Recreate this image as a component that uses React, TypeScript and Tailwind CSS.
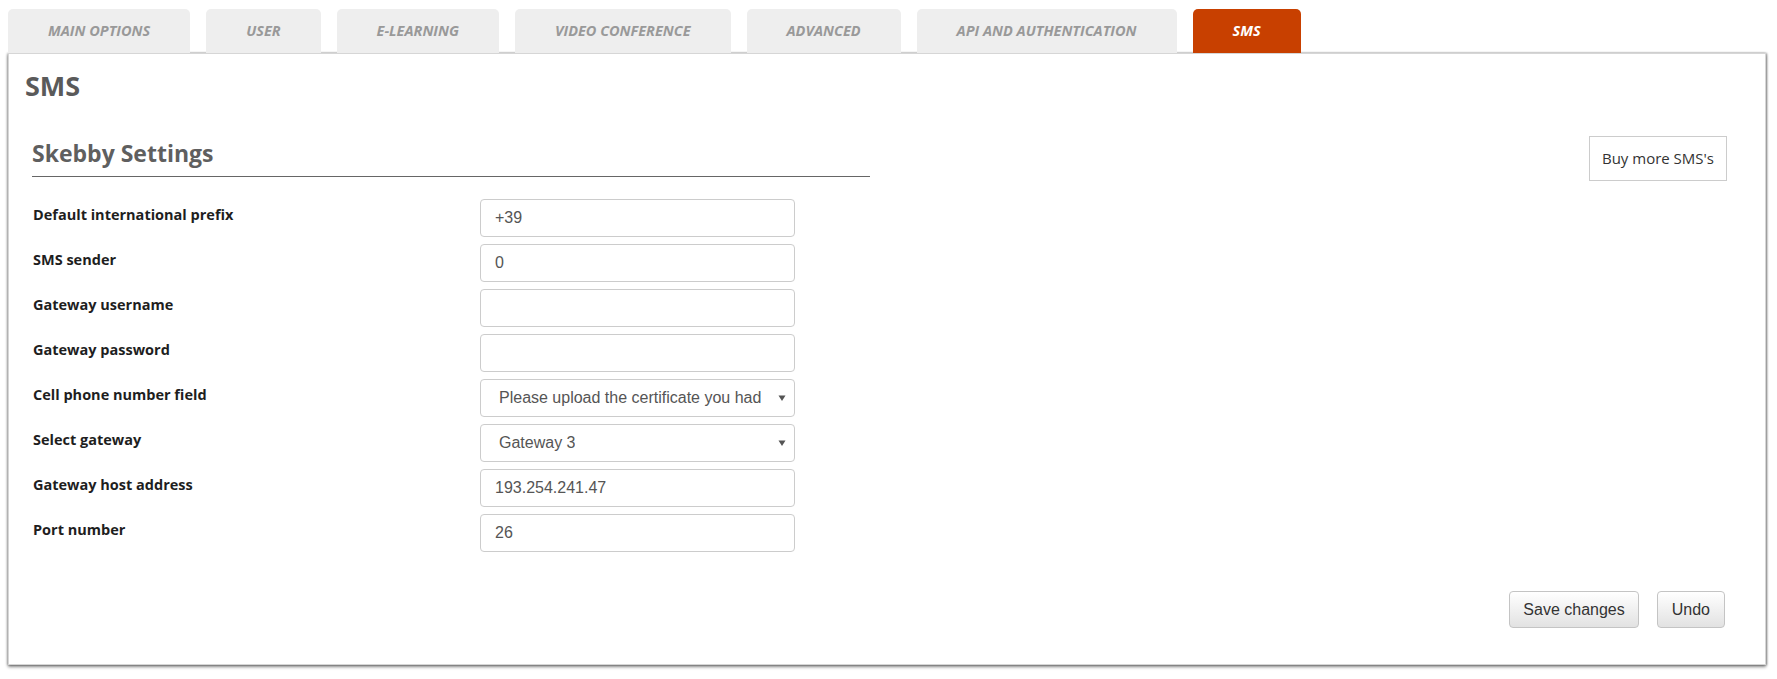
import React from "react";

const tabs = [
  "MAIN OPTIONS",
  "USER",
  "E-LEARNING",
  "VIDEO CONFERENCE",
  "ADVANCED",
  "API AND AUTHENTICATION",
  "SMS",
];

type Row = { label: string; value: string; kind: "input" | "select" };

const rows: Row[] = [
  { label: "Default international prefix", value: "+39", kind: "input" },
  { label: "SMS sender", value: "0", kind: "input" },
  { label: "Gateway username", value: "", kind: "input" },
  { label: "Gateway password", value: "", kind: "input" },
  { label: "Cell phone number field", value: "Please upload the certificate you had", kind: "select" },
  { label: "Select gateway", value: "Gateway 3", kind: "select" },
  { label: "Gateway host address", value: "193.254.241.47", kind: "input" },
  { label: "Port number", value: "26", kind: "input" },
];

function Arrow() {
  return (
    <svg width="8" height="8" viewBox="0 0 8 8" className="shrink-0">
      <path d="M0.5 1.5 L7.5 1.5 L4 7 Z" fill="#555" />
    </svg>
  );
}

export default function App() {
  return (
    <div className="w-[1777px] h-[679px] bg-white font-['Open_Sans',sans-serif] overflow-hidden">
      <div className="flex gap-[16px] pl-[8px] pt-[9px]">
        {tabs.map((t) => {
          const active = t === "SMS";
          return (
            <div
              key={t}
              className={
                active
                  ? "h-[44px] px-[40px] flex items-center rounded-t-[5px] bg-[#c84000] text-white text-[14.5px] font-bold italic"
                  : "h-[44px] px-[40px] flex items-center rounded-t-[5px] bg-[#eeeeee] text-[#999999] text-[14.5px] font-bold italic"
              }
            >
              {t}
            </div>
          );
        })}
      </div>
      <div className="ml-[8px] w-[1758px] h-[612px] border border-[#d6d6d6] shadow-[0_2px_3px_rgba(0,0,0,0.45),-1px_0_2px_rgba(0,0,0,0.2),1px_0_2px_rgba(0,0,0,0.35)] flex flex-col">
        <h1 className="mt-[18px] ml-[16px] text-[27px] leading-[27px] font-bold text-[#5a5a5a]">SMS</h1>
        <div className="flex justify-between items-start h-[41px] mt-[37px] pl-[23px] pr-[38px]">
          <div className="w-[838px] border-b border-[#666] pb-[11px] pt-[6px]">
            <h2 className="text-[23px] leading-[23px] font-bold text-[#5f5f5f]">Skebby Settings</h2>
          </div>
          <button className="h-[45px] shrink-0 px-[12px] border border-[#cccccc] bg-white text-[15px] text-[#333] font-['Open_Sans',sans-serif]">
            Buy more SMS's
          </button>
        </div>
        <div className="flex flex-col gap-[7px] mt-[22px] pl-[24px]">
          {rows.map((r) => (
            <div key={r.label} className="flex items-start h-[38px]">
              <div className="w-[447px] pt-[6px] text-[14.5px] leading-[20px] font-bold text-[#1e1e1e]">
                {r.label}
              </div>
              {r.kind === "input" ? (
                <div className="w-[315px] h-[38px] border border-[#cccccc] rounded-[4px] pl-[14px] flex items-center font-['Liberation_Sans',Arial,sans-serif] text-[16px] text-[#555]">
                  {r.value}
                </div>
              ) : (
                <div className="w-[315px] h-[38px] border border-[#cccccc] rounded-[4px] pl-[18px] pr-[8px] flex items-center justify-between font-['Liberation_Sans',Arial,sans-serif] text-[16px] text-[#555]">
                  <span className="whitespace-nowrap overflow-hidden">{r.value}</span>
                  <Arrow />
                </div>
              )}
            </div>
          ))}
        </div>
        <div className="flex justify-end gap-[18px] mt-[39px] pr-[40px]">
          <button className="h-[37px] px-[13px] rounded-[4px] border border-[#c4c4c4] bg-gradient-to-b from-white to-[#e2e2e2] font-['Liberation_Sans',Arial,sans-serif] text-[16px] text-[#333]">
            Save changes
          </button>
          <button className="h-[37px] px-[14px] rounded-[4px] border border-[#c4c4c4] bg-gradient-to-b from-white to-[#e2e2e2] font-['Liberation_Sans',Arial,sans-serif] text-[16px] text-[#333]">
            Undo
          </button>
        </div>
      </div>
    </div>
  );
}
